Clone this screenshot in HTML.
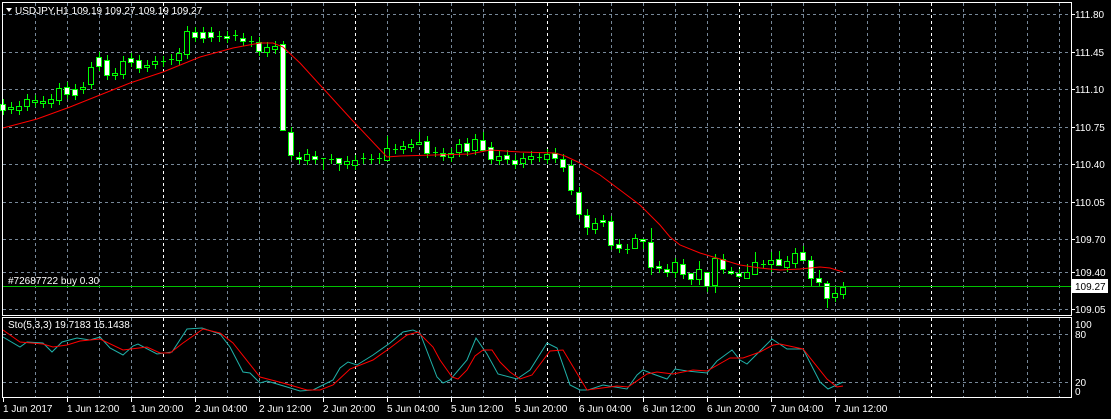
<!DOCTYPE html>
<html><head><meta charset="utf-8"><style>
html,body{margin:0;padding:0;background:#000;width:1111px;height:419px;overflow:hidden}
svg{display:block}
text{font-family:"Liberation Sans",sans-serif;font-size:10px;fill:#fff}
</style></head><body>
<svg id="s" width="1111" height="419" xmlns="http://www.w3.org/2000/svg">
<g id="grid"></g>
<g id="cand"></g>
<polyline fill="none" stroke="#f00" stroke-width="1" points="3,128 37,119 70,107 100,95 130,83 163,72 200,57 233,48 260,43 273,43 283,47 300,63 352,120 387,157 400,156 470,154 490,150 520,152 555,153 565,156 580,163 600,175 620,190 640,205 660,225 670,237 680,245 700,253 720,259 740,265 760,268 780,270 800,269 820,267 830,268 843,272"/>
<line x1="3" y1="286.5" x2="1071" y2="286.5" stroke="#00c000"/>
<text x="8" y="284">#72687722 buy 0.30</text>
<polyline fill="none" stroke="#20b2aa" stroke-width="1" points="3,337 20,347 27,342 43,343 52,352 62,342 77,338 90,340 100,337 110,348 123,355 133,346 138,344 157,354 172,352 187,329 202,328 220,334 230,347 243,372 250,373 260,383 267,381 287,387 300,391 313,390 333,380 340,368 348,362 357,365 373,355 390,343 403,332 413,330 420,333 437,377 443,383 450,380 467,360 476,338 487,354 498,374 517,379 530,370 547,343 557,348 570,385 580,390 588,390 603,385 627,389 637,375 643,370 653,374 667,379 675,369 687,371 707,373 717,361 732,350 740,360 747,364 772,339 787,349 803,349 820,382 828,389 843,382"/>
<polyline fill="none" stroke="#f00" stroke-width="1" points="3,330 20,342 43,344 53,347 67,345 80,341 100,339 123,350 147,347 160,353 170,353 183,343 203,329 220,333 233,343 260,377 283,383 307,390 320,390 333,385 350,369 373,360 390,348 407,335 418,332 433,347 440,360 452,377 458,379 467,370 475,356 483,350 492,350 500,362 510,372 520,379 532,375 550,351 563,350 587,390 617,386 628,387 647,374 657,372 673,374 693,370 707,371 730,358 743,358 760,352 773,345 780,344 803,349 827,379 837,387 843,386"/>
<text x="8" y="328">Sto(5,3,3) 19.7183 15.1438</text>
<g fill="none" stroke="#fff">
<rect x="2.5" y="2.5" width="1069" height="313"/>
<rect x="2.5" y="317.5" width="1069" height="80"/>
</g>
<polygon points="6,8 12,8 9,12" fill="#fff"/>
<text x="15" y="14">USDJPY,H1  109.19 109.27 109.19 109.27</text>
<g id="px"></g>
<rect x="1072" y="279" width="36" height="14" fill="#fff"/>
<text x="1075" y="290" style="fill:#000">109.27</text>
<g id="tm"></g>
</svg>
<script>
var NS="http://www.w3.org/2000/svg";
function el(p,t,a,txt){var e=document.createElementNS(NS,t);for(var k in a)e.setAttribute(k,a[k]);if(txt)e.textContent=txt;document.getElementById(p).appendChild(e);}
for(var x=35;x<1071;x+=32){var sep=(x==163||x==355||x==547||x==739||x==931);
el("grid","line",{x1:x+.5,y1:3,x2:x+.5,y2:315,stroke:sep?"#fff":"#778899","stroke-dasharray":"3,3"});
el("grid","line",{x1:x+.5,y1:318,x2:x+.5,y2:397,stroke:sep?"#fff":"#778899","stroke-dasharray":"3,3"});}
var py=[14,52,89,127,164,202,239,272,309],pl=["111.80","111.45","111.10","110.75","110.40","110.05","109.70","109.40","109.05"];
for(var i=0;i<py.length;i++){el("grid","line",{x1:3,y1:py[i]+.5,x2:1071,y2:py[i]+.5,stroke:"#778899","stroke-dasharray":"3,3"});
el("px","line",{x1:1071,y1:py[i]+.5,x2:1075,y2:py[i]+.5,stroke:"#fff"});
el("px","text",{x:1075,y:py[i]+4},pl[i]);}
[334,382].forEach(function(y){el("grid","line",{x1:3,y1:y+.5,x2:1071,y2:y+.5,stroke:"#778899","stroke-dasharray":"3,3"});});
el("px","text",{x:1075,y:328},"100");el("px","text",{x:1075,y:338},"80");
el("px","text",{x:1075,y:386},"20");el("px","text",{x:1075,y:395},"0");
var tl=["1 Jun 2017","1 Jun 12:00","1 Jun 20:00","2 Jun 04:00","2 Jun 12:00","2 Jun 20:00","5 Jun 04:00","5 Jun 12:00","5 Jun 20:00","6 Jun 04:00","6 Jun 12:00","6 Jun 20:00","7 Jun 04:00","7 Jun 12:00"];
for(var i=0;i<tl.length;i++){var tx=3+64*i;el("tm","line",{x1:tx+.5,y1:398,x2:tx+.5,y2:402,stroke:"#fff"});el("tm","text",{x:tx,y:412},tl[i]);}
var c=[[104,110],[109,107],[110,106],[106,99],[102,100],[103,101],[103,99],[100,88],[87,94],[89,95],[89,87],[84,67],[57,66],[60,75],[75,73],[74,61],[58,62],[60,68],[67,65],[64,61],[62,61],[60,59],[60,53],[54,31],[32,37],[32,38],[32,37],[36,37],[36,38],[36,35],[38,41],[41,42],[42,51],[52,47],[49,46],[44,130],
[132,155],[157,159],[160,154],[156,159],[158,158],[159,159],[158,163],[164,161],[165,160],[158,159],[159,159],[158,159],[160,148],[149,149],[149,146],[147,144],[144,142],[141,153],[152,152],[153,156],[157,153],[152,144],[143,151],[150,139],[140,150],[147,159],[160,156],[155,159],[160,164],[163,158],[159,156],[157,157],[159,154],[153,158],
[159,167],[165,190],[192,214],[215,227],[229,223],[220,222],[221,245],[244,248],[249,249],[248,238],[239,241],[242,267],[266,268],[269,272],[272,262],[264,274],[273,279],[279,269],[272,286],[285,258],[259,269],[271,273],[273,276],[278,272],[274,262],[264,264],[264,260],[259,265],[267,261],[263,253],[252,260],[260,278],[278,282],[283,298],[297,293],[294,287]];
var wk={35:[3,0],40:[0,12],42:[0,8],48:[12,0],52:[10,0],60:[8,0],73:[6,8],79:[4,0],80:[0,8],81:[14,8],84:[4,6],86:[0,6],87:[8,6],88:[0,6],89:[4,8],91:[4,2],92:[4,2],93:[8,0],94:[10,0],95:[4,4],96:[8,8],97:[8,0],100:[6,0],101:[4,8],102:[8,4],103:[2,10]};
for(var i=0;i<c.length;i++){var x=3+8*i,o=c[i][0],cl=c[i][1],t=Math.min(o,cl),b=Math.max(o,cl),bear=cl>o;
var w=wk[i]||[5,5];
el("cand","line",{x1:x+.5,y1:t-w[0],x2:x+.5,y2:b+w[1],stroke:"#00ff00"});
if(b-t<2){el("cand","line",{x1:x-2,y1:t+.5,x2:x+3,y2:t+.5,stroke:"#00ff00"});}
else el("cand","rect",{x:x-2.5,y:t+.5,width:5,height:b-t,fill:bear?"#fff":"#000",stroke:"#00ff00"});}
</script>
</body></html>
